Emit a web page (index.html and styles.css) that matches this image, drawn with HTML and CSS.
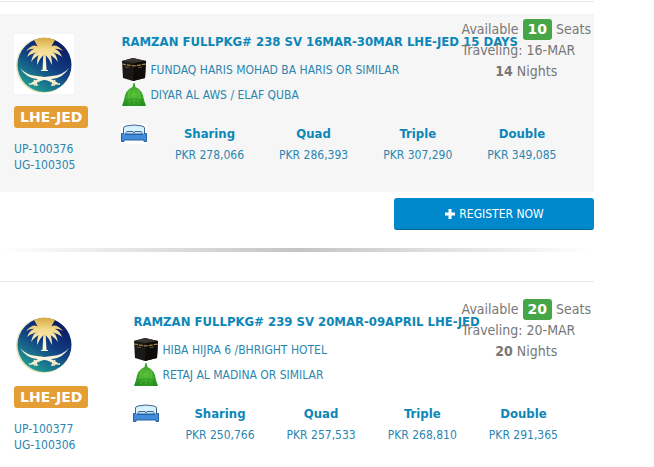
FILE: index.html
```html
<!DOCTYPE html>
<html lang="en">
<head>
    <meta charset="UTF-8">
    <meta name="viewport" content="width=device-width, initial-scale=1.0">
    <title>Umrah Packages</title>
    <link rel="stylesheet" href="styles.css">
</head>
<body>
    <!-- Shared icons -->
    <svg class="sprite" aria-hidden="true">
        <defs>
            <linearGradient id="disc" x1="0.75" y1="0.1" x2="0.25" y2="0.95">
                <stop offset="0" stop-color="#0b1c66"/>
                <stop offset="0.45" stop-color="#123f82"/>
                <stop offset="1" stop-color="#1f9c94"/>
            </linearGradient>
            <linearGradient id="gold" gradientUnits="userSpaceOnUse" x1="0" y1="4" x2="0" y2="32">
                <stop offset="0" stop-color="#d8ab42"/>
                <stop offset="0.4" stop-color="#f2d98a"/>
                <stop offset="1" stop-color="#fdf6d8"/>
            </linearGradient>
            <radialGradient id="dome" cx="0.5" cy="0.5" r="0.6">
                <stop offset="0" stop-color="#5cc43a"/>
                <stop offset="1" stop-color="#258f20"/>
            </radialGradient>
        </defs>
        <symbol id="icon-airline" viewBox="0 0 60 60">
            <circle cx="29.5" cy="31.5" r="27.5" fill="#e9e3b4"/>
            <circle cx="30.5" cy="31" r="27" fill="url(#disc)"/>
            <g fill="url(#gold)">
                <path d="M20 6Q30 1 41 6L37 13L35 19H26L24 13Z"/>
                <path d="M28 15Q20 7 12 17Q20 12 27 18Z"/>
                <path d="M28 15Q17 12 13 23Q20 17 28 19Z"/>
                <path d="M28 16Q19 17 17 28Q22 21 30 19Z"/>
                <path d="M28 16Q23 20 23 31Q26 24 31 19Z"/>
                <path d="M33 15Q41 7 49 17Q41 12 34 18Z"/>
                <path d="M33 15Q44 12 48 23Q41 17 33 19Z"/>
                <path d="M33 16Q42 17 44 28Q39 21 31 19Z"/>
                <path d="M33 16Q38 20 38 31Q35 24 30 19Z"/>
                <path d="M29.5 17H31.5L32.5 36H34V37H27V36H28.5Z"/>
            </g>
            <g fill="#faf4dc">
                <path d="M6 34Q12 41 23 42Q36 43 44 49L42 51Q34 45 23 45Q12 44 6 34Z"/>
                <path d="M55 34Q49 41 38 42Q25 43 17 49L19 51Q27 45 38 45Q49 44 55 34Z"/>
            </g>
            <g fill="none" stroke="#f4ebc0" stroke-width="1.5">
                <path d="M41 46L38 51H41M43 50L46 50"/>
                <path d="M20 46L23 51H20M18 50L15 50"/>
            </g>
        </symbol>
        <symbol id="icon-kaaba" viewBox="0 0 26 24">
            <path d="M1 3L12 0L25 3L24 20L12 23L2 20Z" fill="#1b1917"/>
            <path d="M1 3L12 0L25 3L13 5Z" fill="#39352f"/>
            <path d="M13 5L25 3L24 20L12 23Z" fill="#0d0c0b"/>
            <path d="M1 6L13 8L25 6" fill="none" stroke="#a98744" stroke-width="1.2" stroke-dasharray="4 1"/>
            <path d="M4 9L8 9.5M17 9.5L21 9" fill="none" stroke="#6b552c"/>
        </symbol>
        <symbol id="icon-dome" viewBox="0 0 26 24">
            <path d="M12.5 0H13.5L14.5 4Q22 7 23 17L25 23H1L3 17Q4 7 11.5 4Z" fill="url(#dome)"/>
            <path d="M3 17Q13 15 23 17" fill="none" stroke="#258f20" stroke-width="0.6"/>
            <path d="M9 7Q7 11 7 16M17 7Q19 11 19 16" fill="none" stroke="#7ed257" stroke-width="0.5"/>
            <path d="M6 18L5 22M11 18V22M15 18V22M20 18L21 22" fill="none" stroke="#23841d" stroke-width="0.8"/>
        </symbol>
        <symbol id="icon-bed" viewBox="0 0 26 20">
            <path d="M2.5 10V4Q2.5 2.5 5 2Q13 0 21 2Q23.5 2.5 23.5 4V10" fill="#d8f1ff" stroke="#3c6690"/>
            <path d="M5 10V8.5Q5 7.5 7 7.5H12L13 9L14 7.5H19Q21 7.5 21 8.5V10Z" fill="#c3e3fb" stroke="#3c6690"/>
            <path d="M0.5 9.5H3L4 10.5H22L23 9.5H25.5V17.5H23V16H3V17.5H0.5Z" fill="#438bdc" stroke="#27609f"/>
        </symbol>
        <symbol id="icon-plus" viewBox="0 0 12 12">
            <path d="M4.5 1H7.5V4.5H11V7.5H7.5V11H4.5V7.5H1V4.5H4.5Z" fill="#fff"/>
        </symbol>
    </svg>

    <main class="packages">
        <section class="package">
            <div class="card shaded">
                <div class="flight">
                    <svg class="airline" role="img" aria-label="Saudia"><use href="#icon-airline"/></svg>
                    <span class="route">LHE-JED</span>
                    <div class="codes">UP-100376<br>UG-100305</div>
                </div>
                <div class="details">
                    <h2>RAMZAN FULLPKG# 238 SV 16MAR-30MAR LHE-JED 15 DAYS</h2>
                    <p class="hotel"><svg aria-hidden="true"><use href="#icon-kaaba"/></svg>FUNDAQ HARIS MOHAD BA HARIS OR SIMILAR</p>
                    <p class="hotel"><svg aria-hidden="true"><use href="#icon-dome"/></svg>DIYAR AL AWS / ELAF QUBA</p>
                    <table class="prices">
                        <tr>
                            <td class="bed" rowspan="2"><svg aria-hidden="true"><use href="#icon-bed"/></svg></td>
                            <th scope="col">Sharing</th>
                            <th scope="col">Quad</th>
                            <th scope="col">Triple</th>
                            <th scope="col">Double</th>
                        </tr>
                        <tr>
                            <td>PKR 278,066</td>
                            <td>PKR 286,393</td>
                            <td>PKR 307,290</td>
                            <td>PKR 349,085</td>
                        </tr>
                    </table>
                </div>
                <div class="availability">
                    <div>Available <span class="seats">10</span> Seats</div>
                    <div>Traveling: 16-MAR</div>
                    <div class="nights"><b>14</b> Nights</div>
                </div>
            </div>
            <div class="actions">
                <button type="button" class="register"><svg aria-hidden="true"><use href="#icon-plus"/></svg>REGISTER NOW</button>
            </div>
            <hr class="divider">
        </section>

        <section class="package">
            <div class="card">
                <div class="flight">
                    <svg class="airline" role="img" aria-label="Saudia"><use href="#icon-airline"/></svg>
                    <span class="route">LHE-JED</span>
                    <div class="codes">UP-100377<br>UG-100306</div>
                </div>
                <div class="details">
                    <h2>RAMZAN FULLPKG# 239 SV 20MAR-09APRIL LHE-JED</h2>
                    <p class="hotel"><svg aria-hidden="true"><use href="#icon-kaaba"/></svg>HIBA HIJRA 6 /BHRIGHT HOTEL</p>
                    <p class="hotel"><svg aria-hidden="true"><use href="#icon-dome"/></svg>RETAJ AL MADINA OR SIMILAR</p>
                    <table class="prices">
                        <tr>
                            <td class="bed" rowspan="2"><svg aria-hidden="true"><use href="#icon-bed"/></svg></td>
                            <th scope="col">Sharing</th>
                            <th scope="col">Quad</th>
                            <th scope="col">Triple</th>
                            <th scope="col">Double</th>
                        </tr>
                        <tr>
                            <td>PKR 250,766</td>
                            <td>PKR 257,533</td>
                            <td>PKR 268,810</td>
                            <td>PKR 291,365</td>
                        </tr>
                    </table>
                </div>
                <div class="availability">
                    <div>Available <span class="seats">20</span> Seats</div>
                    <div>Traveling: 20-MAR</div>
                    <div class="nights"><b>20</b> Nights</div>
                </div>
            </div>
        </section>
    </main>
</body>
</html>
```

FILE: styles.css
```css
body {
    margin: 0;
    background-color: #fff;
    color: #2a86b0;
    font-family: Tahoma, "DejaVu Sans Condensed", "Noto Sans", sans-serif;
    font-size: 12px;
    line-height: 16px;
}
.sprite {
    position: absolute;
    width: 0;
    height: 0;
}
.packages {
    padding: 1px 60px 0 0;
}
.package {
    border-top: 1px solid #e6e6e6;
    padding-top: 12px;
}
.card {
    position: relative;
    display: flex;
    gap: 45px;
    padding: 20px 20px 0 14px;
}
.card.shaded {
    gap: 33px;
    padding-bottom: 19px;
    background-color: #f6f6f6;
}
.flight {
    flex: none;
    display: flex;
    flex-direction: column;
    align-items: flex-start;
    gap: 12px;
}
.airline {
    width: 60px;
    height: 60px;
    background-color: #fff;
}
.route {
    padding: 0 6px;
    border-radius: 3px;
    background-color: #e59e35;
    color: #fff;
    font-family: Verdana, "DejaVu Sans", sans-serif;
    font-size: 14px;
    font-weight: bold;
    line-height: 22px;
}
.codes {
    padding-top: 1px;
}
.details {
    flex: 1;
    min-width: 0;
}
h2 {
    margin: 0 0 7px;
    color: #0d86b8;
    font-size: 13px;
    font-weight: bold;
    line-height: 16px;
    white-space: nowrap;
}
.hotel {
    display: flex;
    align-items: center;
    gap: 3px;
    height: 25px;
    margin: 0;
}
.hotel svg {
    width: 26px;
    height: 24px;
}
.prices {
    width: 100%;
    margin-top: 17px;
    border-collapse: collapse;
    table-layout: fixed;
    text-align: center;
}
.prices th {
    padding: 2px 0 3px;
    color: #0d86b8;
    font-size: 13px;
}
.prices td {
    padding: 2px 0 0;
}
.prices .bed {
    width: 36px;
    padding: 0;
    text-align: left;
    vertical-align: top;
}
.bed svg {
    display: block;
    width: 26px;
    height: 20px;
    background-color: #fff;
}
/* sits over the end of long package titles */
.availability {
    position: absolute;
    top: 5px;
    right: 3px;
    color: #777;
    font-size: 14px;
    line-height: 21px;
}
.seats {
    display: inline-block;
    padding: 0 5px;
    border-radius: 3px;
    background-color: #46a546;
    color: #fff;
    font-family: Verdana, "DejaVu Sans", sans-serif;
    font-weight: bold;
}
.nights {
    text-align: center;
}
.actions {
    display: flex;
    justify-content: flex-end;
    padding-top: 6px;
}
.register {
    display: flex;
    align-items: center;
    justify-content: center;
    gap: 3px;
    width: 200px;
    height: 32px;
    border: none;
    border-bottom: 1px solid #006399;
    border-radius: 3px;
    background-color: #08c;
    color: #fff;
    font-family: inherit;
    font-size: 12px;
    cursor: pointer;
}
.register:hover {
    background-color: #0099e6;
}
.register svg {
    width: 12px;
    height: 12px;
}
.divider {
    height: 4px;
    margin: 18px 0 29px;
    border: none;
    background-image: linear-gradient(to right, transparent, #c4c4c4, transparent);
}
```
